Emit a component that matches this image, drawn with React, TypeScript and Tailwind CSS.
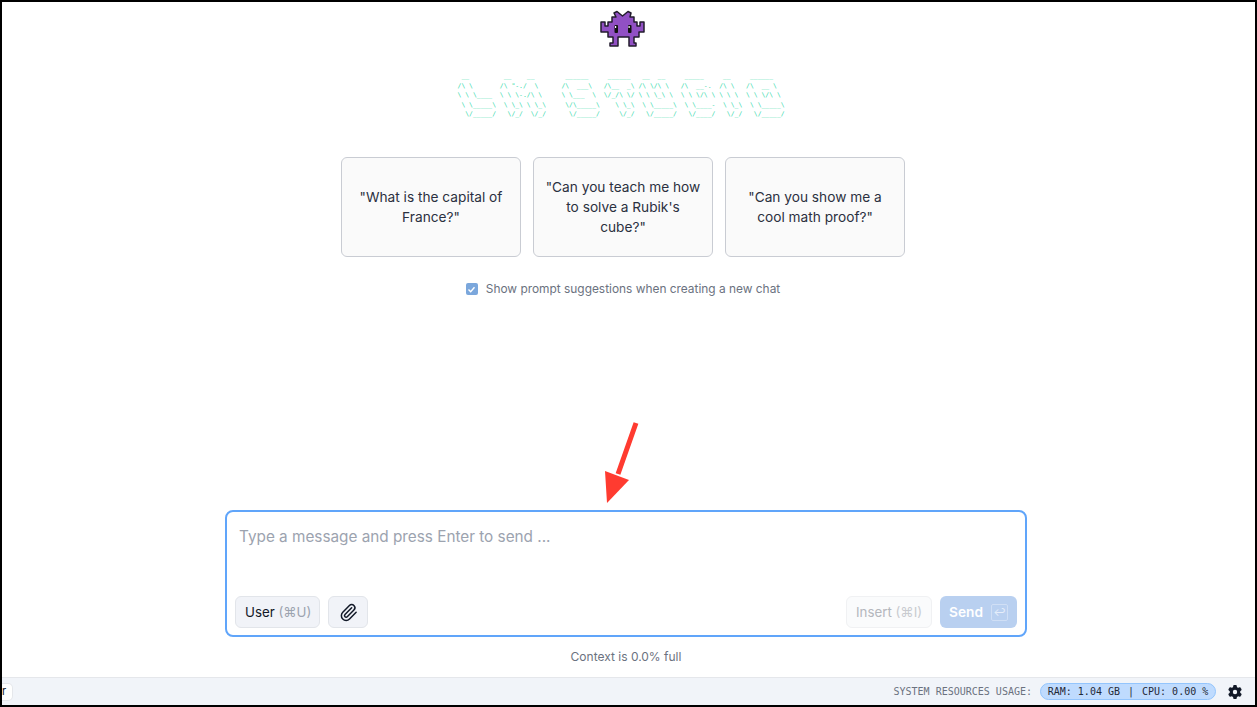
import { Paperclip } from "lucide-react";
import { FaGear } from "react-icons/fa6";

const sans = "font-['Inter','Noto_Sans',sans-serif]";
const mono = "font-['DejaVu_Sans_Mono',monospace]";

// figlet banner, kept as real text
const banner = String.raw` __         __    __        ______     ______   __  __     _____     __     ______    
/\ \       /\ "-./  \      /\  ___\   /\__  _\ /\ \/\ \   /\  __-.  /\ \   /\  __ \   
\ \ \____  \ \ \-./\ \     \ \___  \  \/_/\ \/ \ \ \_\ \  \ \ \/\ \ \ \ \  \ \ \/\ \  
 \ \_____\  \ \_\ \ \_\     \/\_____\    \ \_\  \ \_____\  \ \____-  \ \_\  \ \_____\ 
  \/_____/   \/_/  \/_/      \/_____/     \/_/   \/_____/   \/____/   \/_/   \/_____/ `;

const suggestions = [
  `"What is the capital of France?"`,
  `"Can you teach me how to solve a Rubik's cube?"`,
  `"Can you show me a cool math proof?"`,
];

function Mascot() {
  return (
    <svg width="46" height="38" viewBox="0 0 46 38">
      <path
        d="M1 12h4v4h3v-4h4V7h4L14 3l3-1.5L22.5 6 28 1.5 31 3l-1 4h4v5h3v4h3v-4h4v10h-5v5h-5v6h2v3h-7v-9H18v9h-8v-3h3v-6H8v-5H1z"
        fill="#9150c4"
        stroke="#231c2e"
        strokeWidth="1.5"
        strokeLinejoin="round"
      />
      <rect x="14.5" y="15" width="3.5" height="8" rx="1" fill="#111" />
      <rect x="28" y="15" width="3.5" height="8" rx="1" fill="#111" />
      <rect x="15" y="16" width="1.2" height="2" fill="#fff" />
      <rect x="28.5" y="16" width="1.2" height="2" fill="#fff" />
    </svg>
  );
}

function Arrow() {
  return (
    <svg width="40" height="84" viewBox="0 0 40 84">
      <path d="M36 2 L18 53" stroke="#ff3b30" strokeWidth="5" fill="none" />
      <path d="M5 50 L29 59 L7 82 Z" fill="#ff3b30" />
    </svg>
  );
}

export default function App() {
  return (
    <div className={`${sans} h-[707px] w-full flex flex-col bg-white border-2 border-black overflow-hidden text-[#1f2937]`}>
      <main className="flex-1 flex flex-col items-center relative">
        <div className="mr-[11px] flex flex-col items-center">
          <div className="mt-2">
            <Mascot />
          </div>
          <pre className={`${mono} mt-[24px] h-[48px] text-[6.4px] leading-[9.6px] text-[#2ed8a8]`}>{banner}</pre>
          <div className="mt-[37px] flex gap-3">
            {suggestions.map((text) => (
              <div
                key={text}
                className="w-[180px] h-[100px] px-[10px] flex items-center justify-center text-center text-[13.7px] leading-5 text-[#2b3040] bg-[#fafafa] border border-[#c9ccd3] rounded-md"
              >
                {text}
              </div>
            ))}
          </div>
          <label className="mt-6 flex items-center gap-2 text-[11.9px] leading-4 text-[#6b7280]">
            <span className="w-3 h-3 rounded-[2px] bg-[#7ba7dc] flex items-center justify-center">
              <svg width="9" height="9" viewBox="0 0 9 9">
                <path d="M1.5 4.5 L3.7 6.7 L7.5 2.3" stroke="#fff" strokeWidth="1.4" fill="none" />
              </svg>
            </span>
            Show prompt suggestions when creating a new chat
          </label>
        </div>

        {/* red annotation arrow on top of the screenshot */}
        <div className="absolute left-[598px] top-[419px]">
          <Arrow />
        </div>

        <div className="mt-auto mr-[5px] w-[802px] h-[127px] border-2 border-[#60a5fa] rounded-lg flex flex-col px-2 pt-[15px] pb-[7px]">
          <p className="px-[4px] text-[15.3px] leading-5 text-[#9ca3af]">Type a message and press Enter to send ...</p>
          <div className="mt-auto flex items-center">
            <button className="h-8 pl-[9px] pr-[8px] pt-px text-[13.3px] text-[#111827] bg-[#f1f3f8] border border-[#e2e5ea] rounded-md">
              User <span className="text-[#9ca3af]">(⌘U)</span>
            </button>
            <button className="ml-2 w-10 h-8 flex items-center justify-center bg-[#f1f3f8] border border-[#e2e5ea] rounded-md">
              <Paperclip size={19} strokeWidth={1.9} className="text-[#111827]" />
            </button>
            <button className="ml-auto h-8 px-[9px] pt-px text-[13.3px] text-[#b4b7bd] bg-[#fafbfc] border border-[#f0f1f3] rounded-md">
              Insert <span className="text-[#c9cbd0]">(⌘I)</span>
            </button>
            <button className="ml-2 h-8 px-[9px] pt-px flex items-center gap-2 text-[13.7px] font-semibold text-white bg-[#b9d0f0] rounded-md">
              Send
              <span className="w-[17px] h-[17px] border border-[#d0dff5] rounded-[2px] flex items-center justify-center text-[11px] font-normal text-[#e6eefa]">
                ↩
              </span>
            </button>
          </div>
        </div>
        <p className="mr-[5px] mt-3 mb-3 text-xs leading-4 text-[#6b7280]">Context is 0.0% full</p>
      </main>

      <footer className="h-7 shrink-0 flex items-center bg-[#f1f4f9] border-t border-[#e5e7eb] pr-[13px]">
        <div className="w-[11px] h-[18px] flex items-center bg-white rounded-r-[5px] border border-l-0 border-[#e5e7eb] text-[11px] text-[#111827]">
          r
        </div>
        <span className={`${mono} ml-auto text-[10px] text-[#6b7280]`}>SYSTEM RESOURCES USAGE:</span>
        <span className={`${mono} ml-2 h-[17px] w-[176px] justify-center flex items-center rounded-full bg-[#bfdbfe] border border-[#93c5fd] text-[10px] text-[#1f2937]`}>
          <span>RAM: 1.04 GB</span>
          <span className="mx-2">|</span>
          <span>CPU: 0.00 %</span>
        </span>
        <FaGear size={14} className="ml-[12px] text-[#111827]" />
      </footer>
    </div>
  );
}
